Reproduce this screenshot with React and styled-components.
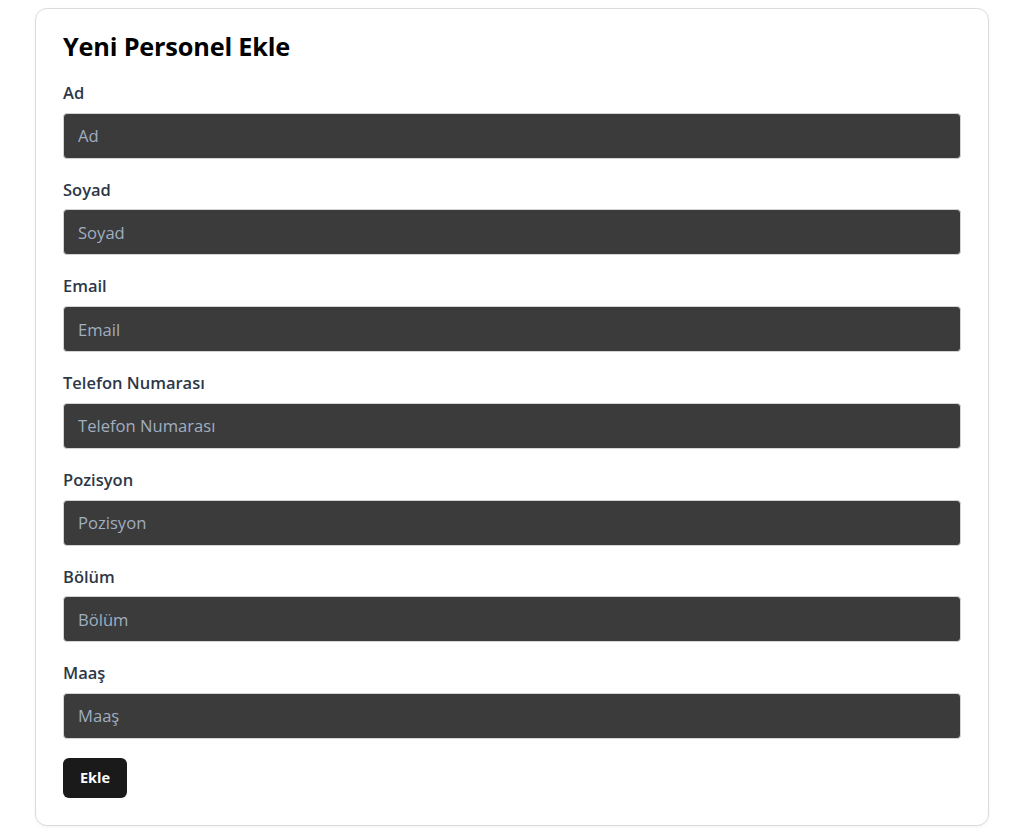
import React from 'react';
import styled, { createGlobalStyle } from 'styled-components';

const GlobalStyle = createGlobalStyle`
    body {
        margin: 0;
        background: #ffffff;
        font-family: "Open Sans", "Noto Sans", sans-serif;
    }
`;

const Page = styled.div`
    padding: 8px 20px 7px 35px;
`;

const Card = styled.div`
    background: #ffffff;
    border: 1px solid #dcdcdc;
    border-radius: 12px;
    box-shadow: 0 1px 3px rgba(0, 0, 0, 0.06);
    padding: 22px 27px 27px 27px;
`;

const Title = styled.h2`
    margin: 0 0 20px 0;
    font-size: 25.3px;
    font-weight: 700;
    line-height: 31px;
    color: #000000;
    letter-spacing: -0.2px;
`;

const Field = styled.div`
    display: flex;
    flex-direction: column;
    gap: 8px;
    margin-bottom: 20px;
`;

const Label = styled.label`
    font-size: 16.5px;
    font-weight: 600;
    line-height: 22.7px;
    color: #2d3748;
`;

const Input = styled.input`
    box-sizing: border-box;
    width: 100%;
    height: 46px;
    padding: 0 14px;
    background: #3b3b3b;
    border: 1px solid #d4d4d4;
    border-radius: 4px;
    color: #ffffff;
    font-family: inherit;
    font-size: 16.6px;
    outline: none;

    &::placeholder {
        color: #a0aec0;
    }
`;

const SubmitButton = styled.button`
    margin-top: -1px;
    height: 40px;
    padding: 0 17px;
    background: #1a1a1a;
    color: #ffffff;
    border: none;
    border-radius: 6px;
    font-family: inherit;
    font-size: 14.5px;
    font-weight: 700;
    cursor: pointer;
`;

const fields = [
    { name: 'ad', label: 'Ad' },
    { name: 'soyad', label: 'Soyad' },
    { name: 'email', label: 'Email', type: 'email' },
    { name: 'telefon', label: 'Telefon Numarası' },
    { name: 'pozisyon', label: 'Pozisyon' },
    { name: 'bolum', label: 'Bölüm' },
    { name: 'maas', label: 'Maaş' },
];

const App = () => {
    return (
        <Page>
            <GlobalStyle />
            <Card>
                <Title>Yeni Personel Ekle</Title>
                <form onSubmit={(e) => e.preventDefault()}>
                    {fields.map((f) => (
                        <Field key={f.name}>
                            <Label htmlFor={f.name}>{f.label}</Label>
                            <Input id={f.name} type={f.type || 'text'} placeholder={f.label} />
                        </Field>
                    ))}
                    <SubmitButton type="submit">Ekle</SubmitButton>
                </form>
            </Card>
        </Page>
    );
};

export default App;
